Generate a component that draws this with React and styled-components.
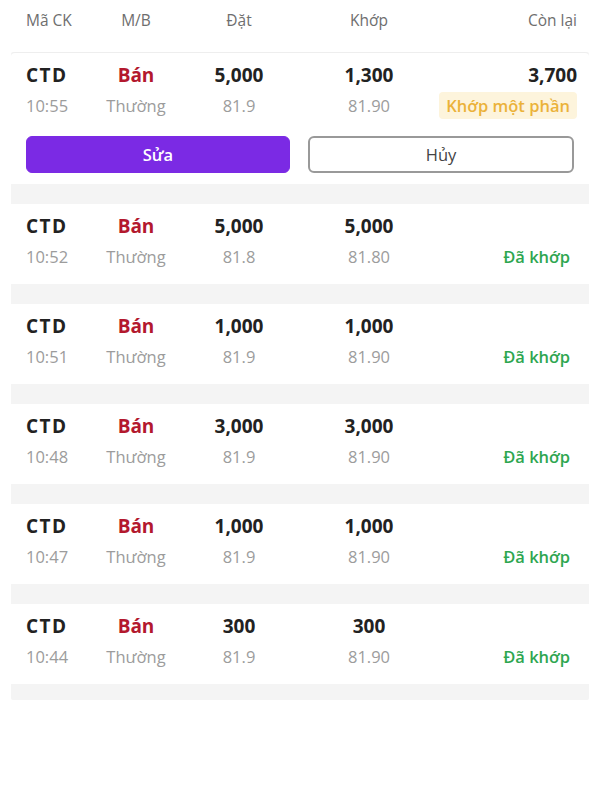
import React from 'react';
import styled, { createGlobalStyle } from 'styled-components';

const GlobalStyle = createGlobalStyle`
  body {
    margin: 0;
    background: #ffffff;
    font-family: "Open Sans", "Noto Sans", sans-serif;
  }
`;

const orders = [
  { time: '10:52', qty: '5,000', price: '81.8', matched: '5,000', matchPrice: '81.80' },
  { time: '10:51', qty: '1,000', price: '81.9', matched: '1,000', matchPrice: '81.90' },
  { time: '10:48', qty: '3,000', price: '81.9', matched: '3,000', matchPrice: '81.90' },
  { time: '10:47', qty: '1,000', price: '81.9', matched: '1,000', matchPrice: '81.90' },
  { time: '10:44', qty: '300', price: '81.9', matched: '300', matchPrice: '81.90' },
];

function App() {
  return (
    <>
      <GlobalStyle />
      <Page>
        <Header>
          <Cell>Mã CK</Cell>
          <Cell $align="center">M/B</Cell>
          <Cell $align="center">Đặt</Cell>
          <Cell $align="center">Khớp</Cell>
          <EndCell>Còn lại</EndCell>
        </Header>

        <List>
          <Card $first>
            <MainRow>
              <Symbol>CTD</Symbol>
              <Side>Bán</Side>
              <Cell $align="center">5,000</Cell>
              <Cell $align="center">1,300</Cell>
              <EndCell>3,700</EndCell>
            </MainRow>
            <SubRow>
              <Cell>10:55</Cell>
              <Cell $align="center">Thường</Cell>
              <Cell $align="center">81.9</Cell>
              <Cell $align="center">81.90</Cell>
              <EndCell>
                <Status $kind="partial">Khớp một phần</Status>
              </EndCell>
            </SubRow>
            <Actions>
              <Button $primary>Sửa</Button>
              <Button>Hủy</Button>
            </Actions>
          </Card>

          {orders.map((o) => (
            <Card key={o.time}>
              <MainRow>
                <Symbol>CTD</Symbol>
                <Side>Bán</Side>
                <Cell $align="center">{o.qty}</Cell>
                <Cell $align="center">{o.matched}</Cell>
                <EndCell />
              </MainRow>
              <SubRow>
                <Cell>{o.time}</Cell>
                <Cell $align="center">Thường</Cell>
                <Cell $align="center">{o.price}</Cell>
                <Cell $align="center">{o.matchPrice}</Cell>
                <EndCell>
                  <Status $kind="done">Đã khớp</Status>
                </EndCell>
              </SubRow>
            </Card>
          ))}
        </List>
      </Page>
    </>
  );
}

const Page = styled.div`
  width: 600px;
  min-height: 800px;
  padding: 0 11px;
  box-sizing: border-box;
`;

const columns = `
  display: grid;
  grid-template-columns: 60px 100px 106px 154px minmax(0, 1fr);
  align-items: center;
  padding: 0 12px 0 15px;
`;

const Header = styled.div`
  ${columns}
  padding-top: 8px;
  padding-bottom: 20px;
  line-height: 24px;
  font-size: 15.5px;
  color: #6e6e6e;
`;

const List = styled.div`
  background: #f4f4f4;
  padding-bottom: 16px;
  display: flex;
  flex-direction: column;
  gap: 20px;
  border-radius: 2px;
`;

const Card = styled.div`
  background: #ffffff;
  padding: ${(p) => (p.$first ? '8px 0 11px' : '8px 0 12px')};
  border-top: ${(p) => (p.$first ? '1px solid #eeeeee' : 'none')};
  border-radius: ${(p) => (p.$first ? '4px 4px 0 0' : '0')};
`;

const Cell = styled.div`
  text-align: ${(p) => p.$align || 'left'};
  white-space: nowrap;
`;

const EndCell = styled.div`
  display: flex;
  justify-content: flex-end;
  min-width: 0;
  white-space: nowrap;
`;

const MainRow = styled.div`
  ${columns}
  height: 28px;
  font-size: 19px;
  font-weight: 700;
  color: #222222;
`;

const Symbol = styled(Cell)`
  letter-spacing: 1.5px;
`;

const Side = styled(Cell)`
  text-align: center;
  color: #b3182e;
`;

const SubRow = styled.div`
  ${columns}
  height: 32px;
  font-size: 16.5px;
  color: #9c9c9c;
`;

const Status = styled.span`
  display: inline-block;
  flex-shrink: 0;
  padding: 0 7px;
  line-height: 27px;
  border-radius: 4px;
  font-weight: 600;
  font-size: 16.5px;
  background: ${(p) => (p.$kind === 'partial' ? '#fdf4dc' : 'transparent')};
  color: ${(p) => (p.$kind === 'partial' ? '#ebb23a' : '#2ea650')};
`;

const Actions = styled.div`
  display: flex;
  gap: 18px;
  margin-top: 15px;
  padding: 0 15px 0 15px;
`;

const Button = styled.button`
  flex: 1;
  height: 37px;
  border-radius: 6px;
  font-family: "Open Sans", "Noto Sans", sans-serif;
  font-size: 16.5px;
  font-weight: ${(p) => (p.$primary ? 600 : 400)};
  color: ${(p) => (p.$primary ? '#ffffff' : '#444444')};
  background: ${(p) => (p.$primary ? '#7b2ae4' : '#ffffff')};
  border: ${(p) => (p.$primary ? '1px solid #7b2ae4' : '2px solid #999999')};
  cursor: pointer;
`;

export default App;
